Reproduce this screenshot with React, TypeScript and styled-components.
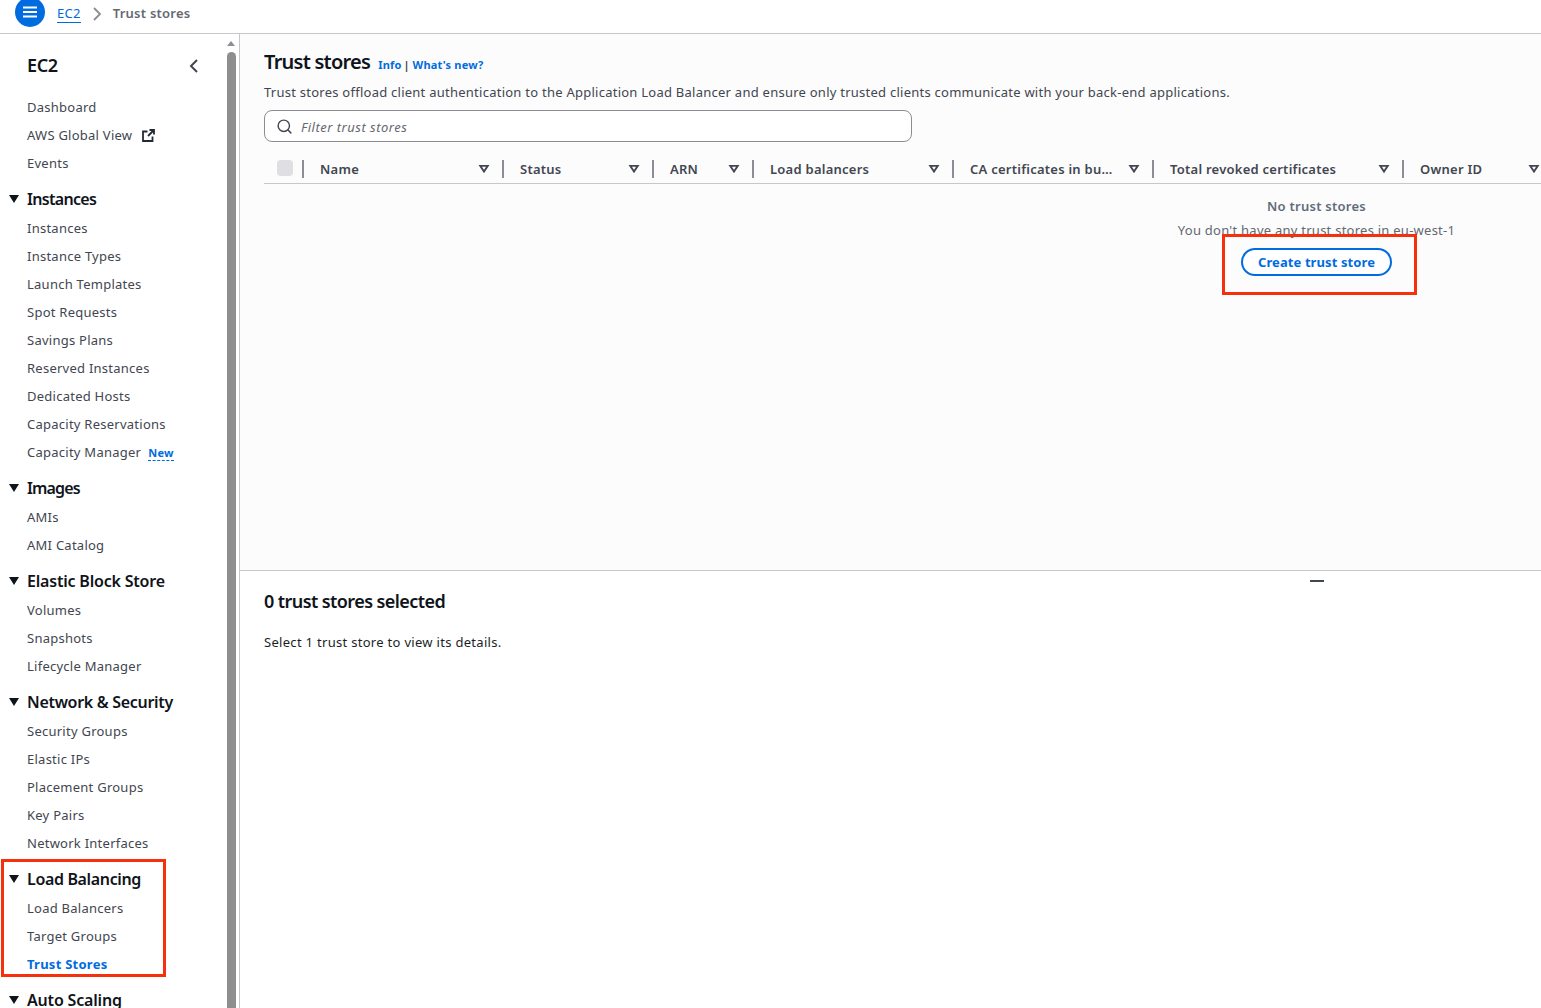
import React from "react";
import styled, { createGlobalStyle } from "styled-components";
import { Search } from "lucide-react";

const Global = createGlobalStyle`
  html, body { margin: 0; padding: 0; height: 100%; overflow: hidden; background: #fff; }
  #root { height: 100%; }
  * { box-sizing: border-box; }
  body { font-family: "Noto Sans", "Open Sans", sans-serif; font-size: 13px; letter-spacing: 0.25px; color: #414750; }
`;

const Page = styled.div`
  position: relative;
  height: 1008px;
  width: 1541px;
  overflow: hidden;
  display: flex;
  flex-direction: column;
`;
const TopBar = styled.header`
  height: 34px;
  flex: none;
  border-bottom: 1px solid #c6c6cd;
  display: flex;
  align-items: flex-start;
  padding-left: 15px;
  background: #fff;
`;
const MenuButton = styled.div`
  width: 30px;
  height: 30px;
  margin-top: -3px;
  border-radius: 50%;
  background: #006ce0;
  display: flex;
  align-items: center;
  justify-content: center;
`;
const Crumb = styled.a`
  margin-left: 12px;
  margin-top: 5px;
  height: 18px;
  line-height: 17px;
  font-size: 13px;
  color: #006ce0;
  border-bottom: 1px solid #006ce0;
`;
const CrumbSep = styled.svg`
  margin: 7px 11px 0 11px;
  flex: none;
`;
const CrumbCurrent = styled.span`
  margin-top: 5px;
  line-height: 17px;
  font-size: 13px;
  font-weight: 600;
  color: #656871;
`;
const Body = styled.div`
  flex: 1;
  display: flex;
  min-height: 0;
`;
const SideNav = styled.nav`
  width: 240px;
  flex: none;
  display: flex;
  border-right: 1px solid #c6c6cd;
  overflow: hidden;
`;
const NavContent = styled.div`
  width: 227px;
  flex: none;
  padding: 19px 0 0 0;
`;
const NavTitleRow = styled.div`
  display: flex;
  align-items: center;
  justify-content: space-between;
  height: 25px;
  padding: 0 28px 0 27px;
  margin-bottom: 15px;
`;
const NavTitle = styled.div`
  font-size: 18px;
  line-height: 25px;
  font-weight: 600;
  color: #0f141a;
  letter-spacing: -0.4px;
`;
const NavItem = styled.div<{ $active?: boolean }>`
  height: 28px;
  line-height: 28px;
  padding-left: 27px;
  font-size: 13px;
  white-space: nowrap;
  display: flex;
  align-items: center;
  color: ${(p) => (p.$active ? "#006ce0" : "#424650")};
  font-weight: ${(p) => (p.$active ? 700 : 400)};
`;
const ExternalIcon = styled.svg`
  width: 13px;
  height: 13px;
  margin-left: 10px;
  flex: none;
`;
const SectionHead = styled.div<{ $track: number }>`
  height: 24px;
  display: flex;
  align-items: center;
  padding-left: 9px;
  margin: 10px 0 3px;
  font-size: 16px;
  font-weight: 600;
  color: #0f141a;
  letter-spacing: ${(p) => p.$track}px;
  white-space: nowrap;
`;
const Caret = styled.svg`
  width: 10px;
  height: 8px;
  margin-right: 8px;
  flex: none;
`;
const NewBadge = styled.span`
  margin-left: 7px;
  margin-top: 2px;
  font-size: 11px;
  line-height: 14px;
  font-weight: 700;
  color: #006ce0;
  border-bottom: 1px dashed #006ce0;
`;
const ScrollTrack = styled.div`
  width: 12px;
  flex: none;
  display: flex;
  flex-direction: column;
  align-items: flex-start;
`;
const ScrollUp = styled.div`
  width: 0;
  height: 0;
  margin-top: 7px;
  margin-bottom: 6px;
  border-left: 4.5px solid transparent;
  border-right: 4.5px solid transparent;
  border-bottom: 5px solid #8e8e8e;
`;
const ScrollThumb = styled.div`
  width: 9px;
  flex: 1;
  background: #8e8e8e;
  border-radius: 5px 5px 0 0;
`;
const Main = styled.main`
  flex: 1;
  min-width: 0;
  display: flex;
  flex-direction: column;
`;
const ListPanel = styled.section`
  height: 537px;
  flex: none;
  background: #fcfcfc;
  border-bottom: 1px solid #c6c6cd;
  padding: 13px 0 0 24px;
  overflow: hidden;
`;
const TitleRow = styled.div`
  display: flex;
  align-items: baseline;
  height: 29px;
`;
const PageTitle = styled.h1`
  margin: 0;
  font-size: 20px;
  line-height: 29px;
  font-weight: 600;
  letter-spacing: -0.75px;
  color: #0f141a;
`;
const InfoLinks = styled.span`
  margin-left: 8px;
  font-size: 11px;
  font-weight: 700;
  letter-spacing: 0.2px;
  color: #006ce0;
  white-space: nowrap;
`;
const Pipe = styled.span`
  color: #424650;
  font-weight: 700;
  margin: 0 3px 0 2px;
  letter-spacing: 0;
`;
const Description = styled.p`
  margin: 7px 0 0;
  font-size: 13px;
  line-height: 18px;
  color: #424650;
  white-space: nowrap;
`;
const FilterBox = styled.div`
  margin-top: 9px;
  width: 648px;
  height: 32px;
  border: 1px solid #8c8c94;
  border-radius: 8px;
  background: #fff;
  display: flex;
  align-items: center;
  padding-left: 11px;
  gap: 8px;
`;
const FilterText = styled.span`
  margin-top: 1px;
  font-size: 13px;
  font-style: italic;
  letter-spacing: 0.5px;
  color: #656871;
`;
const HeaderRow = styled.div`
  margin-top: 9px;
  height: 33px;
  border-bottom: 1px solid #c6c6cd;
  display: flex;
  align-items: flex-start;
  width: 1277px;
  overflow: hidden;
`;
const SelectCell = styled.div`
  width: 40px;
  flex: none;
  height: 32px;
  display: flex;
`;
const Check = styled.div`
  width: 16px;
  height: 16px;
  margin: 9px 9px 0 13px;
  background: #dedee3;
  border-radius: 4px;
`;
const Col = styled.div<{ $w: number }>`
  width: ${(p) => p.$w}px;
  flex: none;
  height: 32px;
  display: flex;
  align-items: flex-start;
  padding-left: 16px;
`;
const ColLabel = styled.span`
  flex: 1;
  min-width: 0;
  margin: 9px 12px 0 0;
  line-height: 18px;
  font-size: 13px;
  font-weight: 600;
  color: #424650;
  white-space: nowrap;
  overflow: hidden;
  text-overflow: ellipsis;
`;
const ColDivider = styled.span`
  width: 2px;
  height: 18px;
  flex: none;
  margin-top: 9px;
  background: #8c8c94;
`;
const SortIcon = styled.svg<{ $end?: boolean }>`
  width: 12px;
  height: 10px;
  flex: none;
  margin: 13px ${(p) => (p.$end ? 1 : 12)}px 0 0;
`;
const EmptyState = styled.div`
  width: 2105px;
  padding-top: 13px;
  display: flex;
  flex-direction: column;
  align-items: center;
`;
const EmptyTitle = styled.div`
  font-size: 13px;
  line-height: 18px;
  font-weight: 600;
  color: #5f6b7a;
`;
const EmptyText = styled.div`
  margin-top: 6px;
  font-size: 13px;
  line-height: 18px;
  color: #656871;
`;
const CreateButton = styled.button`
  margin-top: 9px;
  width: 151px;
  height: 28px;
  border: 2px solid #006ce0;
  border-radius: 14px;
  background: #fff;
  color: #006ce0;
  font: 700 13px "Noto Sans", sans-serif;
  letter-spacing: 0.1px;
  padding: 0;
`;
const DetailPanel = styled.section`
  flex: 1;
  position: relative;
  background: #fff;
  padding: 18px 0 0 24px;
`;
const Splitter = styled.div`
  position: absolute;
  top: 9px;
  left: 1070px;
  width: 14px;
  height: 2px;
  background: #414750;
`;
const DetailTitle = styled.h2`
  margin: 0;
  font-size: 18px;
  line-height: 25px;
  font-weight: 600;
  letter-spacing: -0.58px;
  color: #0f141a;
`;
const DetailText = styled.p`
  margin: 19px 0 0;
  font-size: 13px;
  line-height: 18px;
  letter-spacing: 0.3px;
  color: #1a1f26;
`;
const Callout = styled.div<{ $x: number; $y: number; $w: number; $h: number }>`
  position: absolute;
  left: ${(p) => p.$x}px;
  top: ${(p) => p.$y}px;
  width: ${(p) => p.$w}px;
  height: ${(p) => p.$h}px;
  border: 3px solid #f6300c;
  pointer-events: none;
`;

const DownCaret = () => (
  <Caret viewBox="0 0 10 8"><path d="M0 0h10L5 8z" fill="#0f141a" /></Caret>
);

const sections: { title: string; track: number; items: string[] }[] = [
  { title: "Instances", track: -0.68, items: ["Instances", "Instance Types", "Launch Templates", "Spot Requests", "Savings Plans", "Reserved Instances", "Dedicated Hosts", "Capacity Reservations", "Capacity Manager"] },
  { title: "Images", track: -0.85, items: ["AMIs", "AMI Catalog"] },
  { title: "Elastic Block Store", track: -0.2, items: ["Volumes", "Snapshots", "Lifecycle Manager"] },
  { title: "Network & Security", track: -0.3, items: ["Security Groups", "Elastic IPs", "Placement Groups", "Key Pairs", "Network Interfaces"] },
  { title: "Load Balancing", track: -0.35, items: ["Load Balancers", "Target Groups", "Trust Stores"] },
  { title: "Auto Scaling", track: -0.18, items: [] },
];

const columns: { label: string; w: number }[] = [
  { label: "Name", w: 200 },
  { label: "Status", w: 150 },
  { label: "ARN", w: 100 },
  { label: "Load balancers", w: 200 },
  { label: "CA certificates in bundle", w: 200 },
  { label: "Total revoked certificates", w: 250 },
  { label: "Owner ID", w: 137 },
];

export default function App() {
  return (
    <Page>
      <Global />
      <TopBar>
        <MenuButton>
          <svg width="16" height="14" viewBox="0 0 16 14">
            <path d="M1 2.5h14M1 7h14M1 11.5h14" stroke="#fff" strokeWidth="2" />
          </svg>
        </MenuButton>
        <Crumb>EC2</Crumb>
        <CrumbSep width="10" height="14" viewBox="0 0 10 14">
          <path d="M2 1l6 6-6 6" fill="none" stroke="#8c8c94" strokeWidth="1.8" />
        </CrumbSep>
        <CrumbCurrent>Trust stores</CrumbCurrent>
      </TopBar>
      <Body>
        <SideNav>
          <NavContent>
            <NavTitleRow>
              <NavTitle>EC2</NavTitle>
              <svg width="10" height="14" viewBox="0 0 10 14">
                <path d="M8 1L2 7l6 6" fill="none" stroke="#424650" strokeWidth="2" />
              </svg>
            </NavTitleRow>
            <NavItem>Dashboard</NavItem>
            <NavItem>
              AWS Global View
              <ExternalIcon viewBox="0 0 13 13">
                <path d="M5.5 2.5H1v9.5h9.5V7.5M7.5 1H12v4.5M12 1L6 7" fill="none" stroke="#232a33" strokeWidth="1.8" />
              </ExternalIcon>
            </NavItem>
            <NavItem>Events</NavItem>
            {sections.map((s) => (
              <React.Fragment key={s.title}>
                <SectionHead $track={s.track}>
                  <DownCaret />
                  {s.title}
                </SectionHead>
                {s.items.map((i) => (
                  <NavItem key={i} $active={i === "Trust Stores"}>
                    {i}
                    {i === "Capacity Manager" && <NewBadge>New</NewBadge>}
                  </NavItem>
                ))}
              </React.Fragment>
            ))}
          </NavContent>
          <ScrollTrack>
            <ScrollUp />
            <ScrollThumb />
          </ScrollTrack>
        </SideNav>
        <Main>
          <ListPanel>
            <TitleRow>
              <PageTitle>Trust stores</PageTitle>
              <InfoLinks>Info<Pipe>|</Pipe>What's new?</InfoLinks>
            </TitleRow>
            <Description>
              Trust stores offload client authentication to the Application Load Balancer and ensure only trusted clients communicate with your back-end applications.
            </Description>
            <FilterBox>
              <Search size={17} color="#424650" strokeWidth={2} />
              <FilterText>Filter trust stores</FilterText>
            </FilterBox>
            <HeaderRow>
              <SelectCell>
                <Check />
                <ColDivider />
              </SelectCell>
              {columns.map((c, idx) => {
                const last = idx === columns.length - 1;
                return (
                  <Col key={c.label} $w={c.w}>
                    <ColLabel>{c.label}</ColLabel>
                    <SortIcon viewBox="0 0 12 10" $end={last}>
                      <path d="M2.2 1.8h7.6L6 7.6z" fill="none" stroke="#424650" strokeWidth="1.8" />
                    </SortIcon>
                    {!last && <ColDivider />}
                  </Col>
                );
              })}
            </HeaderRow>
            <EmptyState>
              <EmptyTitle>No trust stores</EmptyTitle>
              <EmptyText>You don't have any trust stores in eu-west-1</EmptyText>
              <CreateButton>Create trust store</CreateButton>
            </EmptyState>
          </ListPanel>
          <DetailPanel>
            <Splitter />
            <DetailTitle>0 trust stores selected</DetailTitle>
            <DetailText>Select 1 trust store to view its details.</DetailText>
          </DetailPanel>
        </Main>
      </Body>
      <Callout $x={1222} $y={234} $w={195} $h={61} />
      <Callout $x={1} $y={859} $w={165} $h={118} />
    </Page>
  );
}
